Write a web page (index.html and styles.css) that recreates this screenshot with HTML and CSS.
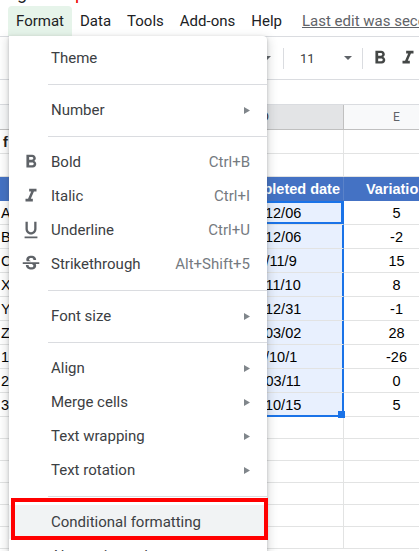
FILE: index.html
```html
<!DOCTYPE html>
<html>
<head>
<meta charset="utf-8">
<link rel="stylesheet" href="styles.css">
</head>
<body>
<div class="app">
  <div class="title"><span class="title-line"><span class="t-g">g</span><span class="t-red">p</span></span></div>

  <div class="menubar">
    <span class="mb-item active">Format</span>
    <span class="mb-item">Data</span>
    <span class="mb-item">Tools</span>
    <span class="mb-item">Add-ons</span>
    <span class="mb-item">Help</span>
    <span class="last-edit">Last edit was seconds ago</span>
  </div>

  <div class="toolbar">
    <span class="tb-spacer"></span>
    <svg class="tb-arrow" viewBox="0 0 8 4"><polygon points="0,0 8,0 4,4"/></svg>
    <span class="tb-sep"></span>
    <span class="tb-size"><span class="tb-size-val">11</span><svg class="tb-arrow" viewBox="0 0 8 4"><polygon points="0,0 8,0 4,4"/></svg></span>
    <span class="tb-sep tb-sep-2"></span>
    <svg class="tb-icon" viewBox="0 0 24 24"><path d="M15.6 10.79c.97-.67 1.65-1.77 1.65-2.79 0-2.26-1.75-4-4-4H7v14h7.04c2.09 0 3.71-1.7 3.71-3.79 0-1.52-.86-2.820-2.15-3.42zM10 6.5h3c.83 0 1.5.67 1.5 1.5s-.67 1.5-1.5 1.5h-3v-3zm3.5 9H10v-3h3.5c.83 0 1.5.67 1.5 1.5s-.67 1.5-1.5 1.5z"/></svg>
    <svg class="tb-icon" viewBox="0 0 24 24"><path d="M10 4v3h2.21l-3.42 8H6v3h8v-3h-2.21l3.42-8H18V4z"/></svg>
  </div>

  <div class="formula-bar"></div>

  <div class="sheet">
    <div class="row colhead">
      <div class="ch">A</div><div class="ch">B</div><div class="ch">C</div><div class="ch ch-sel">D</div><div class="ch">E</div>
    </div>
    <div class="row"><div class="c c-title">f</div><div class="c"></div><div class="c"></div><div class="c"></div><div class="c"></div></div>
    <div class="row r23"><div class="c"></div><div class="c"></div><div class="c"></div><div class="c"></div><div class="c"></div></div>
    <div class="row th">
      <div class="c"></div><div class="c"></div><div class="c"></div><div class="c c-d">Completed date</div><div class="c c-e">Variation</div>
    </div>
    <div class="row"><div class="c">A</div><div class="c"></div><div class="c"></div><div class="c c-date sel active">2020/12/06</div><div class="c c-num">5</div></div>
    <div class="row"><div class="c">B</div><div class="c"></div><div class="c"></div><div class="c c-date sel">2020/12/06</div><div class="c c-num">-2</div></div>
    <div class="row"><div class="c">C</div><div class="c"></div><div class="c"></div><div class="c c-date sel">2020/11/9</div><div class="c c-num">15</div></div>
    <div class="row"><div class="c">X</div><div class="c"></div><div class="c"></div><div class="c c-date sel">2020/11/10</div><div class="c c-num">8</div></div>
    <div class="row"><div class="c">Y</div><div class="c"></div><div class="c"></div><div class="c c-date sel">2020/12/31</div><div class="c c-num">-1</div></div>
    <div class="row"><div class="c">Z</div><div class="c"></div><div class="c"></div><div class="c c-date sel">2021/03/02</div><div class="c c-num">28</div></div>
    <div class="row"><div class="c">1</div><div class="c"></div><div class="c"></div><div class="c c-date sel">2020/10/1</div><div class="c c-num">-26</div></div>
    <div class="row"><div class="c">2</div><div class="c"></div><div class="c"></div><div class="c c-date sel">2021/03/11</div><div class="c c-num">0</div></div>
    <div class="row"><div class="c">3</div><div class="c"></div><div class="c"></div><div class="c c-date sel last">2020/10/15<span class="handle"></span></div><div class="c c-num">5</div></div>
    <div class="row r22"><div class="c"></div><div class="c"></div><div class="c"></div><div class="c"></div><div class="c"></div></div>
    <div class="row r22"><div class="c"></div><div class="c"></div><div class="c"></div><div class="c"></div><div class="c"></div></div>
    <div class="row r22"><div class="c"></div><div class="c"></div><div class="c"></div><div class="c"></div><div class="c"></div></div>
    <div class="row r22"><div class="c"></div><div class="c"></div><div class="c"></div><div class="c"></div><div class="c"></div></div>
    <div class="row r22"><div class="c"></div><div class="c"></div><div class="c"></div><div class="c"></div><div class="c"></div></div>
    <div class="row r22"><div class="c"></div><div class="c"></div><div class="c"></div><div class="c"></div><div class="c"></div></div>
  </div>

  <div class="menu">
    <div class="mi"><span class="mi-icon"></span><span class="mi-label">Theme</span></div>
    <div class="sep"></div>
    <div class="mi"><span class="mi-icon"></span><span class="mi-label">Number</span><svg class="sub" viewBox="0 0 6 7"><polygon points="0,0 6,3.5 0,7"/></svg></div>
    <div class="sep"></div>
    <div class="mi">
      <svg class="mi-icon" viewBox="0 0 24 24"><path d="M15.6 10.79c.97-.67 1.65-1.77 1.65-2.79 0-2.26-1.75-4-4-4H7v14h7.04c2.09 0 3.71-1.7 3.71-3.79 0-1.52-.86-2.82-2.15-3.42zM10 6.5h3c.83 0 1.5.67 1.5 1.5s-.67 1.5-1.5 1.5h-3v-3zm3.5 9H10v-3h3.5c.83 0 1.5.67 1.5 1.5s-.67 1.5-1.5 1.5z"/></svg>
      <span class="mi-label">Bold</span><span class="kbd">Ctrl+B</span>
    </div>
    <div class="mi">
      <svg class="mi-icon" viewBox="0 0 24 24"><path d="M10 4v3h2.21l-3.42 8H6v3h8v-3h-2.21l3.42-8H18V4z"/></svg>
      <span class="mi-label">Italic</span><span class="kbd">Ctrl+I</span>
    </div>
    <div class="mi">
      <svg class="mi-icon" viewBox="0 0 24 24"><path d="M12 17c3.31 0 6-2.69 6-6V3h-2.5v8c0 1.93-1.57 3.5-3.5 3.5S8.5 12.93 8.5 11V3H6v8c0 3.31 2.69 6 6 6zm-7 2v2h14v-2H5z"/></svg>
      <span class="mi-label">Underline</span><span class="kbd">Ctrl+U</span>
    </div>
    <div class="mi">
      <svg class="mi-icon" viewBox="0 0 24 24"><path d="M7.24 8.75c-.26-.48-.39-1.03-.39-1.67 0-.61.13-1.16.4-1.67.26-.5.63-.93 1.11-1.29.48-.35 1.05-.63 1.7-.83.66-.19 1.39-.29 2.18-.29.81 0 1.54.11 2.21.34.66.22 1.23.54 1.69.94.47.4.83.88 1.08 1.43.25.55.38 1.15.38 1.81h-3.01c0-.31-.05-.59-.15-.85-.09-.27-.24-.49-.44-.68-.2-.19-.45-.33-.75-.44-.3-.1-.66-.16-1.06-.16-.39 0-.74.04-1.03.13-.29.09-.53.21-.72.36-.19.16-.34.34-.44.55-.1.21-.15.43-.15.66 0 .48.25.88.74 1.21.38.25.77.48 1.41.7H7.39c-.05-.08-.11-.17-.15-.25zM21 12v-2H3v2h9.62c.18.07.4.14.55.2.37.17.66.34.87.51.21.17.35.36.43.57.07.2.11.43.11.69 0 .23-.05.45-.14.66-.09.2-.23.38-.42.53-.19.15-.42.26-.71.35-.29.08-.63.13-1.01.13-.43 0-.83-.04-1.18-.13s-.66-.23-.91-.42c-.25-.19-.45-.44-.59-.75-.14-.31-.25-.76-.25-1.21H6.4c0 .55.08 1.13.24 1.58.16.45.37.85.65 1.21.28.35.6.66.98.92.37.26.78.48 1.22.65.44.17.9.3 1.38.39.48.08.96.13 1.44.13.8 0 1.53-.09 2.18-.28s1.21-.45 1.67-.79c.46-.34.82-.77 1.07-1.27s.38-1.07.38-1.71c0-.6-.1-1.14-.31-1.61-.05-.11-.11-.23-.17-.33H21z"/></svg>
      <span class="mi-label">Strikethrough</span><span class="kbd">Alt+Shift+5</span>
    </div>
    <div class="sep"></div>
    <div class="mi"><span class="mi-icon"></span><span class="mi-label">Font size</span><svg class="sub" viewBox="0 0 6 7"><polygon points="0,0 6,3.5 0,7"/></svg></div>
    <div class="sep"></div>
    <div class="mi"><span class="mi-icon"></span><span class="mi-label">Align</span><svg class="sub" viewBox="0 0 6 7"><polygon points="0,0 6,3.5 0,7"/></svg></div>
    <div class="mi"><span class="mi-icon"></span><span class="mi-label">Merge cells</span><svg class="sub" viewBox="0 0 6 7"><polygon points="0,0 6,3.5 0,7"/></svg></div>
    <div class="mi"><span class="mi-icon"></span><span class="mi-label">Text wrapping</span><svg class="sub" viewBox="0 0 6 7"><polygon points="0,0 6,3.5 0,7"/></svg></div>
    <div class="mi"><span class="mi-icon"></span><span class="mi-label">Text rotation</span><svg class="sub" viewBox="0 0 6 7"><polygon points="0,0 6,3.5 0,7"/></svg></div>
    <div class="sep"></div>
    <div class="mi hover"><span class="mi-icon"></span><span class="mi-label">Conditional formatting</span></div>
    <div class="mi"><span class="mi-icon"></span><span class="mi-label">Alternating colors</span></div>
    <div class="callout"></div>
  </div>
</div>
</body>
</html>
```

FILE: styles.css
```css
* { box-sizing: border-box; }
html, body { margin: 0; padding: 0; }
body {
  width: 419px;
  height: 551px;
  overflow: hidden;
  background: #fff;
  font-family: Roboto, "Liberation Sans", sans-serif;
}
.app {
  position: relative;
  width: 419px;
  height: 551px;
  overflow: hidden;
}

/* title (only descenders visible) */
.title {
  height: 5px;
  overflow: hidden;
  font-size: 18px;
  white-space: nowrap;
}
.title-line {
  display: block;
  margin-top: -18px;
  line-height: 22px;
  padding-left: 17px;
  color: #202124;
}
.t-red { color: #e00; margin-left: 48px; }

/* menubar */
.menubar {
  height: 32px;
  display: flex;
  align-items: stretch;
  padding-left: 8px;
  padding-top: 1px;
  border-bottom: 1px solid #dadce0;
  font-size: 15px;
  color: #202124;
  white-space: nowrap;
}
.mb-item {
  display: flex;
  align-items: center;
  padding: 0 8px;
  border-radius: 4px 4px 0 0;
}
.mb-item.active { background: #e6f4ea; }
.last-edit {
  display: flex;
  align-items: center;
  margin-left: 12px;
  color: #5f6368;
  text-decoration: underline;
}

/* toolbar */
.toolbar {
  height: 43px;
  border-bottom: 1px solid #dadce0;
  display: flex;
  align-items: center;
  white-space: nowrap;
}
.tb-spacer { width: 263px; flex: none; }
.tb-arrow { width: 8px; height: 4px; flex: none; fill: #5f6368; }
.tb-sep { width: 1px; height: 21px; background: #dadce0; margin-left: 12px; flex: none; }
.tb-sep-2 { margin-left: 0; }
.tb-size {
  width: 78px;
  flex: none;
  display: flex;
  align-items: center;
  justify-content: space-between;
  padding: 0 10px 0 16px;
  font-size: 13px;
  color: #3c4043;
}
.tb-icon { width: 22px; height: 22px; flex: none; margin-left: 6px; fill: #444746; }

.formula-bar { height: 25px; border-bottom: 1px solid #dadce0; }

/* sheet */
.sheet { font-family: "Liberation Sans", Arial, sans-serif; }
.row {
  display: grid;
  grid-template-columns: 60px 70px 57px 157px 106px;
  height: 24px;
  width: 450px;
}
.row.r23 { height: 23px; }
.row.r22 { height: 22px; }
.c {
  border-right: 1px solid #e2e3e3;
  border-bottom: 1px solid #e2e3e3;
  font-size: 14.5px;
  color: #000;
  display: flex;
  align-items: center;
  padding-left: 1px;
  white-space: nowrap;
  position: relative;
}
.c-title { font-weight: bold; padding-left: 3px; color: #1f1a17; }

.colhead { height: 25px; }
.ch {
  background: #f8f9fa;
  border-right: 1px solid #c0c0c0;
  border-bottom: 1px solid #c0c0c0;
  font-family: Roboto, Arial, sans-serif;
  font-size: 12px;
  color: #5f6368;
  display: flex;
  align-items: center;
  justify-content: center;
}
.ch-sel { background: #e3e4e6; color: #202124; }

.th .c {
  background: #4472c4;
  color: #fff;
  font-weight: bold;
  border-right-color: #5a82c9;
  border-bottom-color: #4472c4;
}
.th .c-d { justify-content: flex-end; padding-right: 3px; }
.th .c-e { justify-content: center; padding-left: 0; }

.c-date { justify-content: center; padding-left: 0; }
.c-num { justify-content: center; padding-left: 0; }

.sel {
  background: #e8f0fe;
  border-right-color: #1a73e8;
  box-shadow: inset -1px 0 0 #1a73e8;
}
.sel.active { box-shadow: inset 0 0 0 2px #1a73e8; }
.sel.last {
  border-bottom-color: #1a73e8;
  box-shadow: inset -1px -1px 0 #1a73e8;
  z-index: 2;
}
.handle {
  position: absolute;
  right: -2px;
  bottom: -2px;
  width: 7px;
  height: 7px;
  background: #1a73e8;
}

/* dropdown menu */
.menu {
  position: absolute;
  top: 36px;
  left: 9px;
  width: 258px;
  background: #fff;
  border-radius: 0 4px 4px 4px;
  padding-top: 5px;
  box-shadow: 0 4px 8px 3px rgba(60,64,67,.15), 0 1px 3px rgba(60,64,67,.3);
  z-index: 10;
  font-family: Roboto, "Liberation Sans", sans-serif;
  font-size: 15px;
  color: #3c4043;
}
.mi {
  height: 34px;
  display: flex;
  align-items: center;
  padding: 0 17px 0 11px;
  white-space: nowrap;
}
.mi.hover { background: #f1f3f4; }
.mi-icon {
  width: 22px;
  height: 22px;
  flex: none;
  margin-right: 9px;
  fill: #5f6368;
}
.mi-label { flex: 1; }
.kbd { color: #757a7f; }
.sub { width: 6px; height: 7px; fill: #80868b; flex: none; }
.sep {
  height: 1px;
  background: #dadce0;
  margin: 9px 0 8px 39px;
}
.callout {
  position: absolute;
  top: 462px;
  left: 2px;
  width: 257px;
  height: 42px;
  border: 4px solid #ff0000;
}
```
